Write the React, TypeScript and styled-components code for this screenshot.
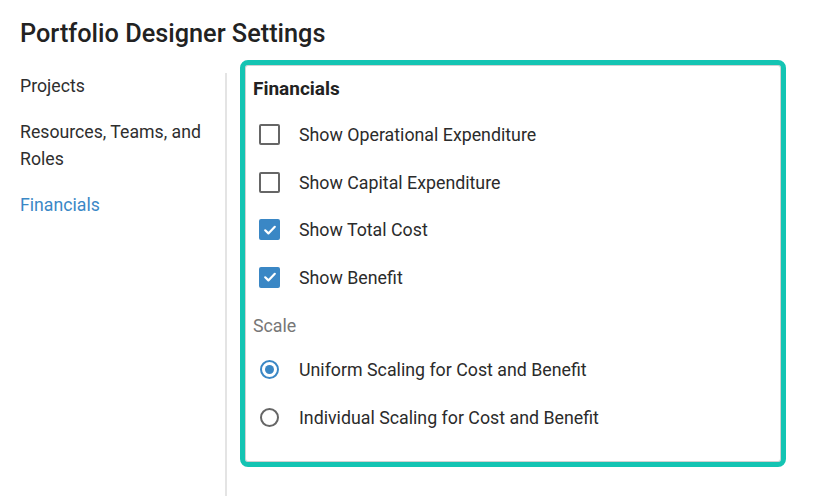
import { createGlobalStyle } from 'styled-components';
import styled from 'styled-components';

const GlobalStyle = createGlobalStyle`
  html, body {
    margin: 0;
    padding: 0;
    background: #ffffff;
    font-family: Roboto, 'Liberation Sans', Arial, sans-serif;
    color: #2b2b2b;
  }
`;

const navItems = [
  { label: 'Projects', active: false },
  { label: 'Resources, Teams, and Roles', active: false },
  { label: 'Financials', active: true },
];

const costOptions = [
  { label: 'Show Operational Expenditure', checked: false },
  { label: 'Show Capital Expenditure', checked: false },
  { label: 'Show Total Cost', checked: true },
  { label: 'Show Benefit', checked: true },
];

const scaleOptions = [
  { label: 'Uniform Scaling for Cost and Benefit', selected: true },
  { label: 'Individual Scaling for Cost and Benefit', selected: false },
];

const App = () => (
  <Page>
    <GlobalStyle />
    <Title>Portfolio Designer Settings</Title>
    <Body>
      <Sidebar>
        {navItems.map((item) => (
          <NavItem key={item.label} active={item.active}>
            {item.label}
          </NavItem>
        ))}
      </Sidebar>
      <Panel>
        <Heading>Financials</Heading>
        {costOptions.map((opt) => (
          <Row key={opt.label}>
            <Checkbox checked={opt.checked}>
              {opt.checked && (
                <svg width="14" height="14" viewBox="0 0 14 14">
                  <path
                    d="M2.2 7.3 L5.4 10.4 L11.8 3.8"
                    fill="none"
                    stroke="#fff"
                    strokeWidth="2.2"
                    strokeLinecap="round"
                    strokeLinejoin="round"
                  />
                </svg>
              )}
            </Checkbox>
            <Label>{opt.label}</Label>
          </Row>
        ))}
        <SubHeading>Scale</SubHeading>
        {scaleOptions.map((opt) => (
          <Row key={opt.label}>
            <Radio selected={opt.selected} />
            <Label>{opt.label}</Label>
          </Row>
        ))}
      </Panel>
    </Body>
  </Page>
);

const Page = styled.div`
  height: 100vh;
  display: flex;
  flex-direction: column;
  overflow: hidden;
`;

const Title = styled.h1`
  margin: 0;
  padding: 20px 20px 0;
  font-size: 25.3px;
  line-height: 28px;
  font-weight: 500;
  color: #222;
`;

const Body = styled.div`
  flex: 1;
  display: flex;
  align-items: flex-start;
  padding: 12px 0 0 20px;
`;

const Sidebar = styled.nav`
  align-self: stretch;
  margin-top: 13px;
  border-right: 2px solid #e4e4e4;
  box-sizing: border-box;
  width: 207px;
  padding-right: 10px;
`;

const NavItem = styled.div<{ active: boolean }>`
  font-size: 17.7px;
  line-height: 27px;
  margin-bottom: 19px;
  color: ${({ active }) => (active ? '#3a88c6' : '#2e2e2e')};
  cursor: pointer;
`;

const Panel = styled.section`
  width: 546px;
  height: 407px;
  box-sizing: border-box;
  margin-left: 13px;
  border: 5px solid #14c4b3;
  border-radius: 8px;
  box-shadow: inset 0 0 0 1px rgba(0, 0, 0, 0.18);
  padding: 12px 8px 0;
`;

const Heading = styled.div`
  font-size: 19px;
  line-height: 24px;
  font-weight: 700;
  color: #222;
  margin-bottom: 10px;
`;

const SubHeading = styled.div`
  font-size: 17.8px;
  line-height: 24px;
  color: #777;
  margin-top: 13px;
  margin-bottom: 8px;
`;

const Row = styled.div`
  height: 47.5px;
  display: flex;
  align-items: center;
  padding-left: 6px;
`;

const Checkbox = styled.span<{ checked: boolean }>`
  width: 21px;
  height: 21px;
  box-sizing: border-box;
  border-radius: 2px;
  border: 2px solid ${({ checked }) => (checked ? '#3a87c5' : '#666')};
  background: ${({ checked }) => (checked ? '#3a87c5' : '#fff')};
  display: flex;
  align-items: center;
  justify-content: center;
  flex-shrink: 0;
  margin-right: 19px;
`;

const Radio = styled.span<{ selected: boolean }>`
  width: 19px;
  height: 19px;
  margin-left: 1px;
  margin-right: 20px;
  box-sizing: border-box;
  border-radius: 50%;
  border: 2px solid ${({ selected }) => (selected ? '#3a87c5' : '#666')};
  display: flex;
  align-items: center;
  justify-content: center;
  flex-shrink: 0;

  &::after {
    content: '';
    display: ${({ selected }) => (selected ? 'block' : 'none')};
    width: 9px;
    height: 9px;
    border-radius: 50%;
    background: #3a87c5;
  }
`;

const Label = styled.span`
  font-size: 17.8px;
  color: #2b2b2b;
`;

export default App;
